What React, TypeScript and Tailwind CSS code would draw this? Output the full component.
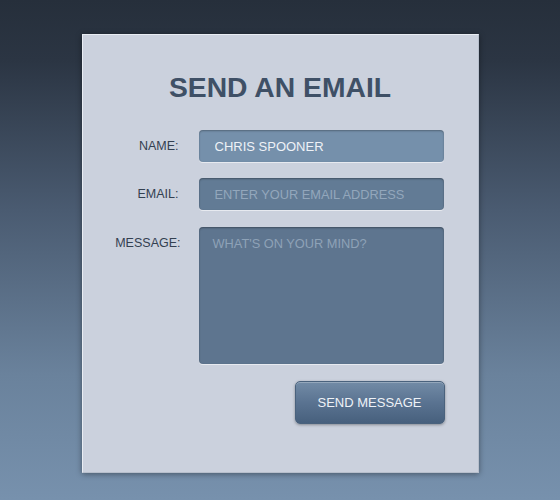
import React from "react";

export default function App() {
  const font = { fontFamily: '"Liberation Sans", Arial, Helvetica, sans-serif' };
  return (
    <div
      className="w-[560px] h-[500px] overflow-hidden bg-[linear-gradient(180deg,#262f3b_0%,#2b3543_12%,#4a5b71_42%,#6a829c_75%,#7791ad_100%)] flex justify-center pt-[34px]"
      style={font}
    >
      <div className="w-[397px] h-[439px] bg-[#cbd1dd] border-t border-l border-[#e9edf3] border-r border-b border-r-[#b7bfcc] border-b-[#b7bfcc] shadow-[0_1px_6px_rgba(0,0,0,0.4)] flex flex-col pt-[36px]">
        <h1 className="text-center text-[28.3px] leading-[32px] font-bold text-[#3f5066]">
          SEND AN EMAIL
        </h1>

        <div className="mt-[27px] flex flex-col">
          <div className="flex items-center">
            <label className="w-[96px] text-right text-[12.5px] leading-[32px] text-[#334050]">NAME:</label>
            <input
              readOnly
              value="CHRIS SPOONER"
              className="ml-[20px] w-[245px] h-[32px] rounded-[4px] bg-[#7590ab] px-[16px] text-[13px] text-[#eef2f7] outline-none shadow-[inset_0_1px_2px_rgba(0,0,0,0.3),0_1px_0_rgba(255,255,255,0.55)]"
              style={font}
            />
          </div>

          <div className="flex items-center mt-[16px]">
            <label className="w-[96px] text-right text-[12.5px] leading-[32px] text-[#334050]">EMAIL:</label>
            <input
              readOnly
              placeholder="ENTER YOUR EMAIL ADDRESS"
              className="ml-[20px] w-[245px] h-[32px] rounded-[4px] bg-[#627b95] px-[16px] text-[12.8px] text-[#eef2f7] placeholder:text-[#93a7bc] outline-none shadow-[inset_0_1px_2px_rgba(0,0,0,0.35),0_1px_0_rgba(255,255,255,0.55)]"
              style={font}
            />
          </div>

          <div className="flex items-start mt-[17px]">
            <label className="w-[98px] text-right text-[12.5px] leading-[32px] text-[#334050]">MESSAGE:</label>
            <textarea
              readOnly
              placeholder="WHAT'S ON YOUR MIND?"
              className="ml-[18px] w-[245px] h-[137px] resize-none rounded-[4px] bg-[#5e758f] px-[14px] pt-[9px] text-[12.8px] leading-[16px] text-[#eef2f7] placeholder:text-[#8ea2b7] outline-none shadow-[inset_0_1px_2px_rgba(0,0,0,0.35),0_1px_0_rgba(255,255,255,0.55)]"
              style={font}
            />
          </div>

          <div className="flex justify-end mt-[17px] pr-[33px]">
            <button
              className="w-[150px] h-[43px] rounded-[5px] border border-[#4a627d] bg-[linear-gradient(180deg,#728ba6_0%,#5a7391_50%,#47607d_100%)] text-[13px] text-[#eef2f7] shadow-[inset_0_1px_0_rgba(255,255,255,0.25),0_1px_3px_rgba(0,0,0,0.35)]"
              style={font}
            >
              SEND MESSAGE
            </button>
          </div>
        </div>
      </div>
    </div>
  );
}
